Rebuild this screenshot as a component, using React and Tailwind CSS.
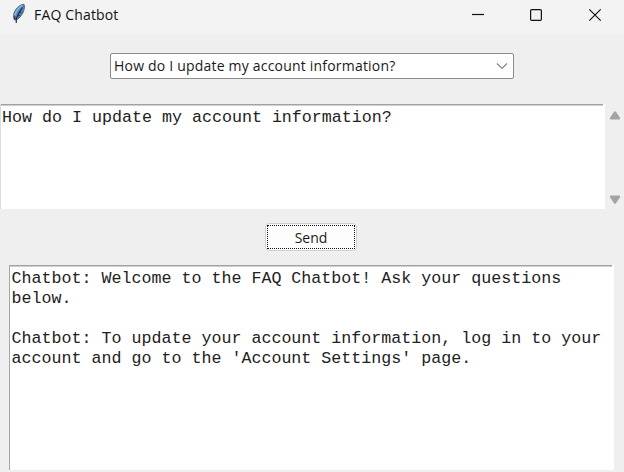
function Feather() {
  return (
    <svg width="16" height="22" viewBox="0 0 16 22" className="mt-[3px] ml-[11px] shrink-0">
      <path d="M12.900 1.200C8.400 1.800 4 6 2.900 10.800c-.6 2.600-.3 4.500.6 6.200l2.200-.3c3.500-2 6.100-5.600 7.100-9.200.7-2.500.9-4.600.1-6.300z" fill="#4a86c8" stroke="#59636d" strokeWidth="1" />
      <path d="M11.300 2.700C7.600 4.500 5 8 3.900 12.300" fill="none" stroke="#8fb9e2" strokeWidth="1.300" />
      <path d="M11.500 4.500C9.300 7.500 7 11 5.400 15.500L5.200 20M3.500 13.500l.7 3" fill="none" stroke="#22272d" strokeWidth="1.100" />
      <path d="M8.500 10l2-.8M7 13l2-1" fill="none" stroke="#22272d" strokeWidth=".8" />
    </svg>
  );
}

function TitleBar() {
  return (
    <header className="flex h-[34px] shrink-0 bg-[#f3f3f3]">
      <Feather />
      <h1 className="ml-[7px] mt-[5px] h-5 w-[90px] whitespace-nowrap text-[14px] leading-5 tracking-[0.16px] text-[#111]">FAQ Chatbot</h1>
      <div className="ml-auto flex">
        <svg width="154" height="30" viewBox="470 0 154 30" fill="none" stroke="#111" strokeWidth="1.200">
          <path d="M472 14.500h12" />
          <rect x="530.600" y="9.600" width="10.800" height="10.800" rx="1.200" />
          <path d="M589.300 9.300l11.400 11.400M600.700 9.300l-11.400 11.400" />
        </svg>
      </div>
    </header>
  );
}

function QuestionSelect() {
  return (
    <div className="ml-[110px] mt-[19px] flex h-[26px] w-[404px] shrink-0 items-center rounded-[2px] border border-[#8c8c8c] bg-white pl-[3px] pr-[5px]">
      <span className="whitespace-nowrap text-[14px] leading-5 tracking-[0.2px] text-[#1a1a1a]">How do I update my account information?</span>
      <svg width="12" height="8" viewBox="0 0 12 8" className="ml-auto" fill="none" stroke="#858585" strokeWidth="1.200">
        <path d="M1 1.500l5 5 5-5" />
      </svg>
    </div>
  );
}

function TopEdge() {
  return (
    <div className="mr-[2px] h-[2px] border-t border-[#a2a2a2] bg-[#cfcfcf]" />
  );
}

function QuestionInput() {
  return (
    <div className="mt-[25px] flex h-[106px] shrink-0">
      <div className="h-[105px] w-[605px] border-l border-l-[#dcdcdc] bg-white">
        <TopEdge />
        <p className="pl-px pt-[2px] font-['Liberation_Mono','Courier_New',monospace] text-[16.670px] leading-5 text-[#222]">How do I update my account information?</p>
      </div>
      <div className="flex grow flex-col items-center justify-between pb-[6px] pl-px pt-[7px]">
        <svg width="12" height="9" viewBox="0 0 12 9" fill="#a3a3a3"><path d="M5 .7q1-1 2 0l4 6q.5 1.800-1 1.800H2q-1.500 0-1-1.800z" /></svg>
        <svg width="12" height="9" viewBox="0 0 12 9" fill="#a3a3a3"><path d="M5 8.300q1 1 2 0l4-6Q11.500.5 10 .5H2Q.5.5 1 2.300z" /></svg>
      </div>
    </div>
  );
}

function SendButton() {
  return (
    <button className="ml-[265px] mt-[13px] flex h-7 w-[92px] shrink-0 rounded-[4px] border border-[#d0d0d0] bg-[#fdfdfd] p-px">
      <span className="block h-6 w-full border border-dotted border-[#111] text-center text-[14px] leading-[23px] text-[#1a1a1a]">Send</span>
    </button>
  );
}

function ChatLog() {
  return (
    <div className="ml-[9px] mt-[14px] h-[205px] w-[605px] shrink-0 border-l border-[#a5a5a5] bg-white">
      <TopEdge />
      <p className="whitespace-pre pl-[1.500px] pt-[2px] font-['Liberation_Mono','Courier_New',monospace] text-[16.670px] leading-5 text-[#222]">
        {"Chatbot: Welcome to the FAQ Chatbot! Ask your questions\nbelow.\n\nChatbot: To update your account information, log in to your\naccount and go to the 'Account Settings' page."}
      </p>
    </div>
  );
}

export default function App() {
  return (
    <main className="flex h-[472px] w-[624px] flex-col overflow-hidden bg-[#efefef] font-['Open_Sans','Noto_Sans',sans-serif]">
      <TitleBar />
      <QuestionSelect />
      <QuestionInput />
      <SendButton />
      <ChatLog />
    </main>
  );
}
